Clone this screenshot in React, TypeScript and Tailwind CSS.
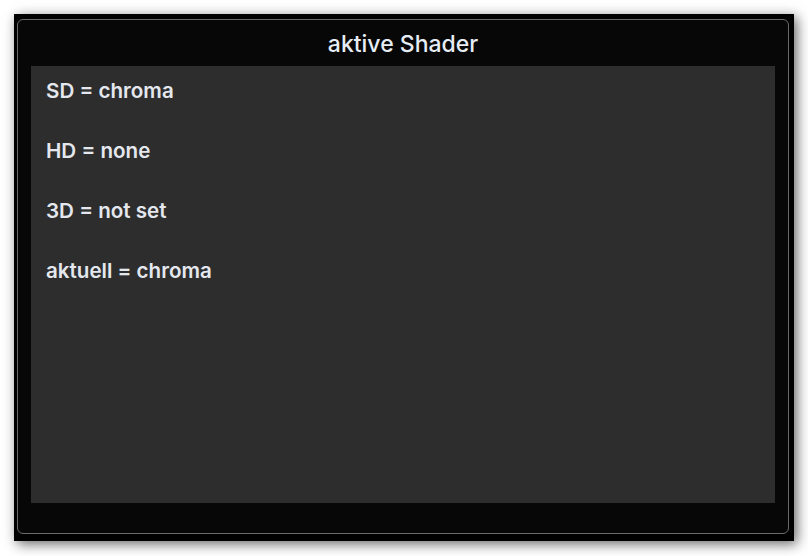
export default function App() {
  const rows = ["SD = chroma", "HD = none", "3D = not set", "aktuell = chroma"];
  return (
    <div className="w-[808px] h-[556px] bg-white pl-[14px] pt-[14px]" style={{ fontFamily: 'Inter, "Liberation Sans", sans-serif' }}>
      <div className="w-[780px] h-[527px] bg-black pl-[3px] pt-[5px] pr-[5px] pb-[7px] shadow-[3px_3px_12px_rgba(0,0,0,0.6)]">
        <div className="h-full rounded-[6px] border border-[#6a6a6a] bg-[#070707] flex flex-col px-[13px] pb-[30px]">
          <div className="h-[46px] pt-[3px] flex items-center justify-center text-[23px] font-medium text-[#e6edf5] leading-none">
            aktive Shader
          </div>
          <div className="flex-1 bg-[#2d2d2d] pl-[15px] pt-[13px] flex flex-col gap-[36px]">
            {rows.map((r) => (
              <div key={r} className="text-[20.6px] leading-[24px] font-semibold text-[#e4e8ee]">{r}</div>
            ))}
          </div>
        </div>
      </div>
    </div>
  );
}
